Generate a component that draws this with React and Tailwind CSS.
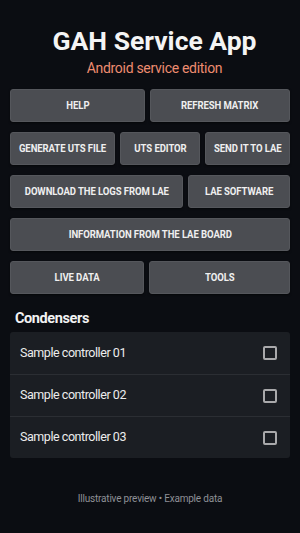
import React, { useState } from "react";

const Btn = ({ label, grow }) => (
  <button
    className={`${grow} min-w-0 h-[33px] rounded-[3px] bg-[#4b4d52] border border-[#55575c] text-[#efefef] shadow-[0_1px_2px_rgba(0,0,0,0.5)] flex items-center justify-center whitespace-nowrap`}
  >
    <span className="inline-block text-[11.5px] font-bold uppercase tracking-[-0.1px] scale-x-[0.83]">{label}</span>
  </button>
);

const controllers = ["Sample controller 01", "Sample controller 02", "Sample controller 03"];

const App = () => {
  const [checked, setChecked] = useState([false, false, false]);

  const toggle = (i) => {
    const next = [...checked];
    next[i] = !next[i];
    setChecked(next);
  };

  return (
    <div
      className="w-[300px] h-[533px] bg-[#0b0d12] flex flex-col"
      style={{ fontFamily: "Roboto, 'Liberation Sans', sans-serif" }}
    >
      <div className="pt-[25px] pl-[9px] flex flex-col items-center">
        <h1 className="text-[26.5px] font-bold leading-[31px] text-[#f4f4f4]">GAH Service App</h1>
        <p className="mt-[3px] text-[14px] leading-[18px] tracking-[-0.3px] text-[#ee8c70]">Android service edition</p>
      </div>

      <div className="px-[10px] mt-[12px] flex flex-col gap-[10px]">
        <div className="flex gap-[5px]">
          <Btn label="Help" grow="flex-[135]" />
          <Btn label="Refresh matrix" grow="flex-[140]" />
        </div>
        <div className="flex gap-[5px]">
          <Btn label="Generate UTS file" grow="flex-[106]" />
          <Btn label="UTS editor" grow="flex-[80]" />
          <Btn label="Send it to LAE" grow="flex-[85]" />
        </div>
        <div className="flex gap-[5px]">
          <Btn label="Download the logs from LAE" grow="flex-[174]" />
          <Btn label="LAE software" grow="flex-[102]" />
        </div>
        <div className="flex">
          <Btn label="Information from the LAE board" grow="flex-1" />
        </div>
        <div className="flex gap-[5px]">
          <Btn label="Live data" grow="flex-[134]" />
          <Btn label="Tools" grow="flex-[141]" />
        </div>
      </div>

      <h2 className="mt-[16px] px-[15px] text-[14.5px] font-bold leading-[18px] tracking-[-0.4px] text-[#f2f2f2]">
        Condensers
      </h2>

      <div className="mx-[10px] mt-[4px] rounded-[3px] bg-[#1b1e23] flex flex-col">
        {controllers.map((name, i) => (
          <div
            key={name}
            className={`h-[42px] flex items-center justify-between pl-[10px] pr-[13px] ${
              i > 0 ? "border-t border-[#2b2e33]" : ""
            }`}
          >
            <span className="text-[12.5px] tracking-[-0.45px] text-[#ececec]">{name}</span>
            <button
              onClick={() => toggle(i)}
              className="w-[14px] h-[14px] rounded-[2px] border-2 border-[#a9a9ab] bg-transparent"
            />
          </div>
        ))}
      </div>

      <p className="mt-[33px] text-center text-[10px] tracking-[-0.2px] text-[#8e9096]">
        Illustrative preview • Example data
      </p>
    </div>
  );
};

export default App;
